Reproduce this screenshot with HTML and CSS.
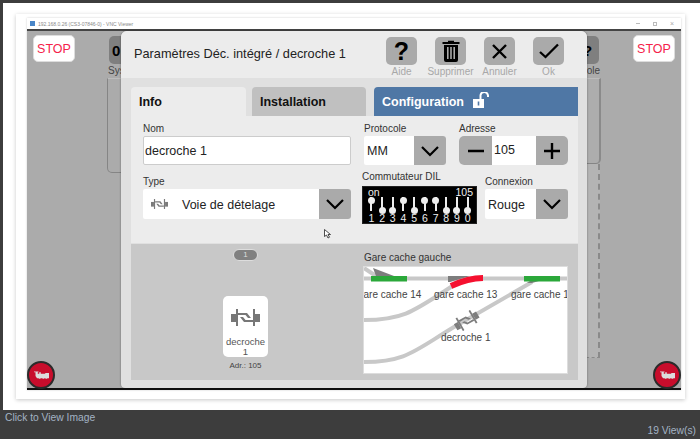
FILE: index.html
```html
<!DOCTYPE html>
<html lang="fr">
<head>
<meta charset="utf-8">
<title>Paramètres Déc. intégré</title>
<link rel="stylesheet" href="styles.css">
</head>
<body>
<svg class="defs" width="0" height="0" aria-hidden="true">
  <symbol id="decoupler" viewBox="0 0 29 17">
    <rect x="0" y="5" width="5" height="8"/>
    <rect x="5" y="0" width="2" height="17"/>
    <rect x="22" y="0" width="2" height="17"/>
    <rect x="24" y="5" width="5" height="8"/>
    <path d="M7 4h9l4 5h-3l-2.500-3H7z"/>
    <path d="M22 13h-9l-4-5h3l2.500 3H22z"/>
  </symbol>
  <symbol id="chevron" viewBox="0 0 20 12">
    <path d="M2 2l8 8 8-8" fill="none" stroke="#000" stroke-width="2.200"/>
  </symbol>
  <symbol id="loco" viewBox="0 0 20 11">
    <path d="M0 0h6v1H5v2h2V1h2v2h6V2h5v7h-2a2 2 0 0 1-3 0h-1a2 2 0 0 1-3 0H9a2 2 0 0 1-3 0H4L2 6V1H0z" fill="#dcdcdc"/>
  </symbol>
</svg>
<main class="sheet">
  <div class="card">
    <div class="window">
      <div class="titlebar">
        <span class="app-icon"></span>
        <span class="app-title">192.168.0.26 (CS3-07846-0) - VNC Viewer</span>
        <span class="win-controls"><i class="wc-min"></i><i class="wc-max"></i><i class="wc-close">×</i></span>
      </div>
      <div class="desk">
        <div class="desk-top">
          <button class="stop">STOP</button>
          <div class="tool tool-left"><span class="tool-box">0</span><span class="tool-cap">Système</span></div>
          <div class="desk-gap"></div>
          <div class="tool tool-right"><span class="tool-box">?</span><span class="tool-cap">Console</span></div>
          <button class="stop">STOP</button>
        </div>
        <div class="desk-mid">
          <div class="side side-left"></div>
          <div class="desk-gap"></div>
          <div class="side-right-wrap">
            <div class="side side-right"></div>
            <div class="side-dashed"></div>
          </div>
        </div>
        <div class="desk-bottom">
          <span class="loco"><svg width="15" height="9"><use href="#loco"/></svg></span>
          <span class="loco"><svg width="15" height="9"><use href="#loco"/></svg></span>
        </div>

        <section class="dialog">
          <header class="dlg-head">
            <h1 class="dlg-title">Paramètres Déc. intégré / decroche 1</h1>
            <div class="actions">
              <div class="action">
                <span class="action-box"><span class="qmark">?</span></span>
                <span class="action-cap">Aide</span>
              </div>
              <div class="action">
                <span class="action-box">
                  <svg width="18" height="22" viewBox="0 0 18 22"><path d="M6 2V.8h6V2h5.500v2H.5V2zM2 5h14v15a2 2 0 0 1-2 2H4a2 2 0 0 1-2-2zm3 2v12h1.600V7zm3.200 0v12h1.600V7zm3.200 0v12H13V7z" fill="#000" fill-rule="evenodd"/></svg>
                </span>
                <span class="action-cap">Supprimer</span>
              </div>
              <div class="action">
                <span class="action-box">
                  <svg width="17" height="17" viewBox="0 0 17 17"><path d="M2 2l13 13M15 2L2 15" stroke="#000" stroke-width="2.400" fill="none"/></svg>
                </span>
                <span class="action-cap">Annuler</span>
              </div>
              <div class="action">
                <span class="action-box">
                  <svg width="20" height="16" viewBox="0 0 20 16"><path d="M1 9l5.500 5L19 1.500" stroke="#000" stroke-width="2.300" fill="none"/></svg>
                </span>
                <span class="action-cap">Ok</span>
              </div>
            </div>
          </header>

          <div class="dlg-body">
            <nav class="tabs">
              <div class="tab tab-info">Info</div>
              <div class="tab tab-install">Installation</div>
              <div class="tab tab-config">Configuration
                <svg class="lock" width="17" height="16" viewBox="0 0 17 16"><path d="M0 7h11v9H0zm4.700 2.500v4h1.600v-4z" fill="#fff" fill-rule="evenodd"/><path d="M7.500 7V4a3.500 3.500 0 0 1 7.500-.5V5" fill="none" stroke="#fff" stroke-width="2"/></svg>
              </div>
            </nav>

            <div class="form">
              <div class="row row-1">
                <div class="field f-name">
                  <label class="lbl">Nom</label>
                  <div class="input">decroche 1</div>
                </div>
                <div class="field f-proto">
                  <label class="lbl">Protocole</label>
                  <div class="select"><span class="sel-text">MM</span><span class="sel-arrow"><svg width="20" height="12"><use href="#chevron"/></svg></span></div>
                </div>
                <div class="field f-addr">
                  <label class="lbl">Adresse</label>
                  <div class="stepper">
                    <span class="step"><svg width="20" height="20" viewBox="0 0 20 20"><path d="M2 10h16" stroke="#000" stroke-width="2.400"/></svg></span>
                    <span class="step-val">105</span>
                    <span class="step"><svg width="20" height="20" viewBox="0 0 20 20"><path d="M2 10h16M10 2v16" stroke="#000" stroke-width="2.400"/></svg></span>
                  </div>
                </div>
              </div>
              <div class="row row-2">
                <div class="field f-type">
                  <label class="lbl">Type</label>
                  <div class="select type-select">
                    <svg class="type-icon" width="17" height="10"><use href="#decoupler"/></svg>
                    <span class="sel-text type-text">Voie de dételage</span>
                    <span class="sel-arrow"><svg width="20" height="12"><use href="#chevron"/></svg></span>
                  </div>
                </div>
                <div class="field f-dil">
                  <label class="lbl">Commutateur DIL</label>
                  <div class="dil">
                    <div class="dil-head"><span>on</span><span>105</span></div>
                    <div class="dil-switches">
                      <div class="sw up"><i></i><b>1</b></div>
                      <div class="sw"><i></i><b>2</b></div>
                      <div class="sw"><i></i><b>3</b></div>
                      <div class="sw up"><i></i><b>4</b></div>
                      <div class="sw"><i></i><b>5</b></div>
                      <div class="sw up"><i></i><b>6</b></div>
                      <div class="sw up"><i></i><b>7</b></div>
                      <div class="sw"><i></i><b>8</b></div>
                      <div class="sw"><i></i><b>9</b></div>
                      <div class="sw"><i></i><b>0</b></div>
                    </div>
                  </div>
                </div>
                <div class="field f-conn">
                  <label class="lbl">Connexion</label>
                  <div class="select"><span class="sel-text">Rouge</span><span class="sel-arrow"><svg width="20" height="12"><use href="#chevron"/></svg></span></div>
                </div>
              </div>
              <svg class="cursor" width="7" height="10" viewBox="0 0 7 10"><path d="M.5.500v7l2-1.500 1.500 3 1.500-.8L4 5.500h2.500z" fill="#fff" stroke="#222" stroke-width=".8"/></svg>
            </div>

            <div class="lower">
              <div class="lower-left">
                <span class="pill">1</span>
                <div class="art-card">
                  <svg class="art-icon" width="29" height="17"><use href="#decoupler"/></svg>
                  <span class="art-name">decroche 1</span>
                </div>
                <span class="art-addr">Adr.: 105</span>
              </div>
              <div class="lower-right">
                <div class="plan-title">Gare cache gauche</div>
                <svg class="plan" width="203" height="106" viewBox="0 0 203 106">
                  <path class="trk" d="M0 11.500H203"/>
                  <path class="trk" d="M0 1l12 8" stroke-width="2"/>
                  <path class="trk" d="M0 53C40 53 50 44 90 18"/>
                  <path class="trk" d="M0 95C42 95 50 84 90 60L168 15"/>
                  <path class="tri" d="M9 1L30 9H12z"/>
                  <path class="tri" d="M84 9h22L86 15h-2z"/>
                  <path class="tri" d="M163 16l8-5h14l-17 5z"/>
                  <path class="grn" d="M7 9h36v5.500H7z"/>
                  <path class="grn" d="M160 9h36v5.500H160z"/>
                  <path class="red" d="M87 19C100 13 108 11 119 11" />
                  <text class="lbl-plan" x="-6" y="31">gare cache 14</text>
                  <text class="lbl-plan" x="70" y="31">gare cache 13</text>
                  <text class="lbl-plan" x="147" y="31">gare cache 14</text>
                  <use href="#decoupler" class="tri" x="0" y="0" width="27" height="15" transform="translate(89 46) rotate(-30 13.500 7.500)"/>
                  <text class="lbl-plan" x="77" y="74">decroche 1</text>
                </svg>
              </div>
            </div>
          </div>
        </section>
      </div>
    </div>
  </div>
</main>
<footer class="foot">
  <div class="foot-left">Click to View Image</div>
  <div class="foot-right">19 View(s)</div>
</footer>
</body>
</html>
```
FILE: styles.css
```css
* { box-sizing: border-box; }
html, body { margin: 0; padding: 0; }
body {
  width: 700px; height: 439px; overflow: hidden;
  background: #3d3d3d;
  font-family: "Liberation Sans", Arial, sans-serif;
  color: #222;
}
.defs { position: absolute; }
.sheet {
  margin: 3px 0 0 3px;
  height: 407px;
  background: #fff;
  padding: 11px 15px 11px 13px;
}
.card {
  height: 385px;
  padding: 4px 4px 9px 11px;
  background: #fff;
  box-shadow: 0 1px 4px rgba(0,0,0,.22);
}
.window { height: 372px; display: flex; flex-direction: column; box-shadow: 0 0 2px rgba(0,0,0,.2); }
.titlebar {
  height: 11px; flex: none;
  display: flex; align-items: center;
  padding: 0 7px 0 3px;
  background: #fff;
}
.app-icon { width: 5px; height: 5px; background: #4a86c8; }
.app-title { margin-left: 3px; font-size: 5px; color: #888; white-space: nowrap; }
.win-controls { margin-left: auto; display: flex; align-items: center; gap: 13px; }
.win-controls i { display: block; width: 4px; height: 4px; font-style: normal; color: #aaa; }
.wc-min { height: 1px !important; background: #bbb; }
.wc-max { border: 1px solid #bbb; }
.wc-close { font-size: 7px; line-height: 4px; }
.desk {
  flex: 1; position: relative;
  display: flex; flex-direction: column;
  background: #ababab;
  border-top: 2px solid #444;
  border-bottom: 2px solid #111;
}
.desk-top { display: flex; padding: 4px 6px 0; height: 47px; flex: none; }
.desk-gap { flex: 1; }
.stop {
  width: 42px; height: 27px; padding: 0;
  background: #fff; border: 1px solid #ddd; border-radius: 5px;
  color: #f5224b; font: 12.500px "Liberation Sans", Arial, sans-serif;
}
.tool { width: 32px; display: flex; flex-direction: column; align-items: center; }
.tool-left { margin-left: 33px; }
.tool-right { margin-right: 33px; }
.tool-box {
  width: 30px; height: 28px; margin-top: 1px;
  display: flex; align-items: center;
  background: #7f7f7f; border-radius: 5px;
  font-size: 15px; font-weight: 700; color: #000;
}
.tool-left .tool-box { padding-left: 3px; }
.tool-right .tool-box { padding-left: 14px; }
.tool-cap { font-size: 10px; color: #444; margin-top: 1px; white-space: nowrap; }
.tool-left .tool-cap { align-self: flex-start; margin-left: 0; }
.tool-right .tool-cap { align-self: flex-end; }
.desk-mid { display: flex; padding: 0 80px; }
.side { border: 1px solid #858585; border-radius: 0 0 5px 5px; border-top-color: #bcbcbc; }
.side-left { width: 40px; height: 95px; border-top: 1px solid #bcbcbc; }
.side-right-wrap { width: 40px; display: flex; flex-direction: column; }
.side-right { height: 86px; border-right: 2px solid #8a8a8a; background: #adadad; }
.side-dashed { height: 194px; width: 30px; margin-left: 9px; border-right: 2px dashed #8a8a8a; border-bottom: 1px dashed #8a8a8a; background: #b4b4b4; }
.desk-bottom {
  margin-top: auto;
  display: flex; justify-content: space-between;
}
.loco {
  width: 28px; height: 28px; border-radius: 50%;
  background: #c80d2c; border: 2px solid #2b2b2b;
  display: flex; align-items: center; justify-content: center;
  margin-bottom: -1px;
}
.dialog {
  position: absolute; left: 94px; top: 0;
  width: 466px; height: 357px;
  display: flex; flex-direction: column;
  border-radius: 6px 6px 4px 4px;
  overflow: hidden;
  background: #e0e0e0;
  box-shadow: 0 0 2px rgba(0,0,0,.45);
}
.dlg-head {
  height: 47px; flex: none;
  background: #ececec;
  display: flex;
  padding: 6px 14px 0 13px;
}
.dlg-title { margin: 9px 0 0; font-size: 12.750px; font-weight: 400; color: #222; white-space: nowrap; }
.actions { margin-left: auto; display: flex; }
.action { width: 49px; display: flex; flex-direction: column; align-items: center; }
.action-box {
  width: 31px; height: 28px;
  background: #aaa; border-radius: 5px;
  display: flex; align-items: center; justify-content: center;
}
.qmark { font-size: 25px; font-weight: 700; color: #000; line-height: 1; }
.action-cap { font-size: 10px; color: #a8a8a8; margin-top: 1px; white-space: nowrap; }
.dlg-body { flex: 1; display: flex; flex-direction: column; padding: 9px 9px 8px 10px; }
.tabs { display: flex; height: 29px; flex: none; font-size: 12.500px; font-weight: 700; }
.tab { display: flex; align-items: center; padding-left: 8px; border-radius: 4px 4px 0 0; color: #111; }
.tab-info { width: 115px; background: #ececec; }
.tab-install { width: 114px; margin-left: 6px; background: #c0c0c0; }
.tab-config { width: 204px; margin-left: 8px; background: #4f77a5; color: #fff; border-radius: 4px 0 0 0; white-space: nowrap; }
.lock { margin-left: 9px; margin-top: -4px; }
.form {
  position: relative;
  height: 127px; flex: none;
  background: #ececec;
  padding: 6px 10px 0 12px;
}
.row { display: flex; }
.row-1 { height: 48px; }
.row-2 { align-items: flex-start; }
.field { display: flex; flex-direction: column; }
.lbl { font-size: 10px; line-height: 14px; color: #333; white-space: nowrap; }
.f-name { width: 208px; }
.f-proto { width: 82px; margin-left: 13px; }
.f-addr { width: 109px; margin-left: 13px; }
.input {
  height: 29px; padding-left: 1px;
  background: #fff; border: 1px solid #ccc; border-radius: 2px;
  font-size: 12.500px; line-height: 28px; color: #222;
}
.select { height: 29px; display: flex; align-items: center; background: #fff; border-radius: 2px 3px 3px 2px; }
.sel-text { flex: 1; padding-left: 3px; font-size: 12.500px; color: #222; }
.sel-arrow {
  width: 32px; align-self: stretch;
  display: flex; align-items: center; justify-content: center;
  background: #aaa; border-radius: 0 3px 3px 0;
}
.stepper { height: 29px; display: flex; background: #fff; border-radius: 5px; overflow: hidden; }
.step { width: 33px; background: #aaa; display: flex; align-items: center; justify-content: center; }
.step:last-child { width: 32px; }
.step-val { flex: 1; padding-left: 2px; font-size: 12.500px; line-height: 29px; color: #222; }
.f-type { width: 208px; padding-top: 5px; }
.type-select { height: 30px; }
.type-select .sel-text, .f-conn .sel-text { padding-top: 2px; }
.type-icon { margin-left: 8px; fill: #7a7a7a; }
.type-text { padding-left: 14px; }
.f-dil { width: 115px; margin-left: 11px; }
.f-dil .lbl { margin-bottom: 2px; }
.dil { height: 38px; background: #000; color: #eee; padding: 0 3px 0 5px; border: 1px solid #222; }
.dil-head { display: flex; justify-content: space-between; font-size: 10.500px; line-height: 10px; }
.dil-switches { display: flex; margin-left: -2px; }
.sw { flex: 1; display: flex; flex-direction: column; align-items: center; }
.sw i {
  display: block; position: relative;
  width: 2px; height: 16px; background: #eee;
}
.sw i::after {
  content: ""; position: absolute; left: -2.500px; top: 10px;
  width: 7px; height: 7px; border-radius: 50%; background: #eee;
}
.sw.up i { height: 14px; }
.sw.up i::after { top: 0; }
.sw.up b { margin-top: 2px; }
.sw b { font-weight: 400; font-size: 10.500px; line-height: 11px; }
.f-conn { width: 83px; margin-left: 8px; padding-top: 5px; }
.f-conn .select { height: 30px; }
.cursor { position: absolute; left: 193px; top: 113px; }
.lower {
  flex: 1; margin-top: 1px;
  display: flex;
  background: #c8c8c8;
}
.lower-left {
  width: 233px; padding: 5px 4px 0 0;
  display: flex; flex-direction: column; align-items: center;
}
.pill {
  width: 25px; height: 12px; border-radius: 6px;
  background: #808080; border: 1px solid #ddd;
  color: #ddd; font-size: 8px; line-height: 10px; text-align: center;
}
.art-card {
  width: 45px; height: 61px; margin-top: 35px;
  background: #fff; border-radius: 5px;
  display: flex; flex-direction: column; align-items: center;
  padding-top: 13px;
}
.art-icon { fill: #777; flex: none; }
.art-name { margin-top: 11px; font-size: 9.500px; line-height: 10px; text-align: center; color: #555; }
.art-addr { margin-top: 3px; font-size: 8px; line-height: 11px; color: #444; }
.lower-right { flex: 1; }
.plan-title { font-size: 10px; line-height: 14px; margin-top: 7px; color: #333; }
.plan { display: block; margin-top: 2px; background: #fff; border: 0; outline: 1px solid #ddd; }
.trk { fill: none; stroke: #c8c8c8; stroke-width: 4; }
.tri { fill: #7d7d7d; }
.grn { fill: #2ba83a; }
.red { fill: none; stroke: #f5102f; stroke-width: 6; }
.lbl-plan { font-size: 10px; fill: #444; font-family: "Liberation Sans", Arial, sans-serif; }
.foot { color: #a3b3c4; font-size: 10.300px; height: 29px; padding: 1px 4px 0 5px; }
.foot-left { line-height: 13px; }
.foot-right { line-height: 13px; text-align: right; }
```
